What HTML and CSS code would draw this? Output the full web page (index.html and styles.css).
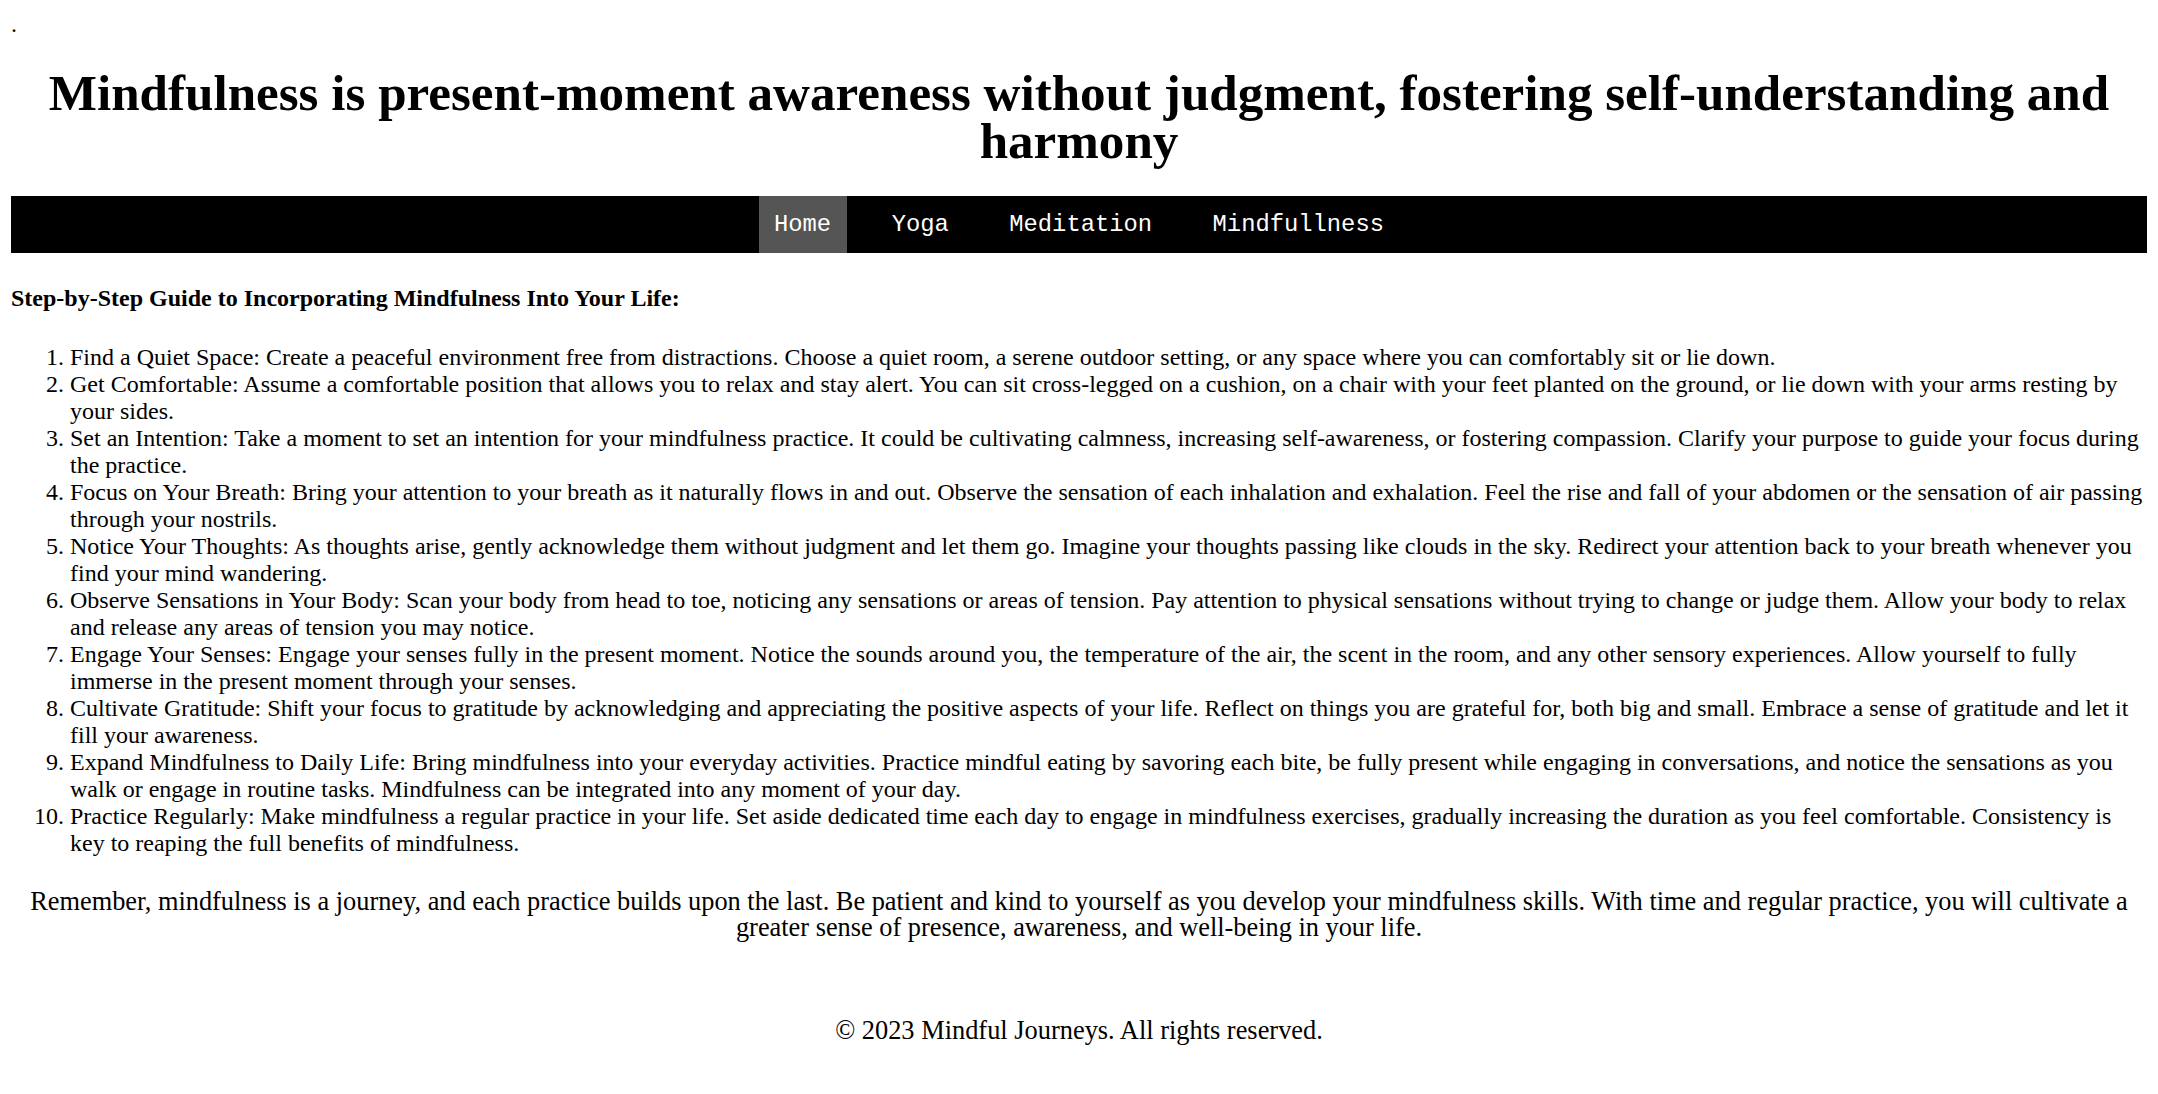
FILE: index.html
```html
<!DOCTYPE html>
<html lang="en">
<head>
<meta charset="utf-8">
<title>Mindful Journeys</title>
<link rel="stylesheet" href="styles.css">
</head>
<body>
<div class="stray">.</div>
<header class="masthead">
  <h1 class="title">Mindfulness is present-moment awareness without judgment, fostering self-understanding and harmony</h1>
</header>
<nav class="menu">
  <a class="menu-item active" href="#">Home</a>
  <a class="menu-item" href="#">Yoga</a>
  <a class="menu-item" href="#">Meditation</a>
  <a class="menu-item" href="#">Mindfullness</a>
</nav>
<main class="content">
  <h4 class="guide-title">Step-by-Step Guide to Incorporating Mindfulness Into Your Life:</h4>
  <ol class="steps">
    <li>Find a Quiet Space: Create a peaceful environment free from distractions. Choose a quiet room, a serene outdoor setting, or any space where you can comfortably sit or lie down.</li>
    <li>Get Comfortable: Assume a comfortable position that allows you to relax and stay alert. You can sit cross-legged on a cushion, on a chair with your feet planted on the ground, or lie down with your arms resting by your sides.</li>
    <li>Set an Intention: Take a moment to set an intention for your mindfulness practice. It could be cultivating calmness, increasing self-awareness, or fostering compassion. Clarify your purpose to guide your focus during the practice.</li>
    <li>Focus on Your Breath: Bring your attention to your breath as it naturally flows in and out. Observe the sensation of each inhalation and exhalation. Feel the rise and fall of your abdomen or the sensation of air passing through your nostrils.</li>
    <li>Notice Your Thoughts: As thoughts arise, gently acknowledge them without judgment and let them go. Imagine your thoughts passing like clouds in the sky. Redirect your attention back to your breath whenever you find your mind wandering.</li>
    <li>Observe Sensations in Your Body: Scan your body from head to toe, noticing any sensations or areas of tension. Pay attention to physical sensations without trying to change or judge them. Allow your body to relax and release any areas of tension you may notice.</li>
    <li>Engage Your Senses: Engage your senses fully in the present moment. Notice the sounds around you, the temperature of the air, the scent in the room, and any other sensory experiences. Allow yourself to fully immerse in the present moment through your senses.</li>
    <li>Cultivate Gratitude: Shift your focus to gratitude by acknowledging and appreciating the positive aspects of your life. Reflect on things you are grateful for, both big and small. Embrace a sense of gratitude and let it fill your awareness.</li>
    <li>Expand Mindfulness to Daily Life: Bring mindfulness into your everyday activities. Practice mindful eating by savoring each bite, be fully present while engaging in conversations, and notice the sensations as you walk or engage in routine tasks. Mindfulness can be integrated into any moment of your day.</li>
    <li>Practice Regularly: Make mindfulness a regular practice in your life. Set aside dedicated time each day to engage in mindfulness exercises, gradually increasing the duration as you feel comfortable. Consistency is key to reaping the full benefits of mindfulness.</li>
  </ol>
  <p class="closing">Remember, mindfulness is a journey, and each practice builds upon the last. Be patient and kind to yourself as you develop your mindfulness skills. With time and regular practice, you will cultivate a greater sense of presence, awareness, and well-being in your life.</p>
</main>
<footer class="site-footer">
  <p class="copyright">&copy; 2023 Mindful Journeys. All rights reserved.</p>
</footer>
</body>
</html>
```
FILE: styles.css
```css
html, body {
  background: #ffffff;
}

body {
  margin: 11px;
  font-family: "Liberation Serif", "Times New Roman", serif;
  font-size: 24px;
  color: #000000;
}

.stray {
  line-height: 27px;
}

.masthead {
  text-align: center;
}

.title {
  font-family: "Liberation Serif", serif;
  font-weight: bold;
  font-size: 51.1px;
  line-height: 48px;
  margin: 31px 0 30.5px;
}

.menu {
  display: flex;
  justify-content: center;
  gap: 29.5px;
  background: #000000;
}

.menu-item {
  display: block;
  font-family: "Liberation Mono", "Courier New", monospace;
  font-size: 23.8px;
  line-height: 27px;
  padding: 15px 15.5px;
  color: #ffffff;
  text-decoration: none;
}

.menu-item.active {
  background: #555555;
}

.content {
  display: block;
}

.guide-title {
  font-size: 24px;
  font-weight: bold;
  line-height: 27px;
  margin: 32px 0;
}

.steps {
  margin: 0 0 24px;
  padding-left: 59px;
  line-height: 27px;
}

.closing {
  font-family: "Liberation Serif", serif;
  font-size: 26.35px;
  line-height: 26px;
  text-align: center;
  margin: 32px 0 0;
}

.site-footer {
  padding-top: 62px;
  text-align: center;
}

.copyright {
  font-family: "Liberation Serif", serif;
  font-size: 26.4px;
  line-height: 27px;
  margin: 14px 0;
}
```
